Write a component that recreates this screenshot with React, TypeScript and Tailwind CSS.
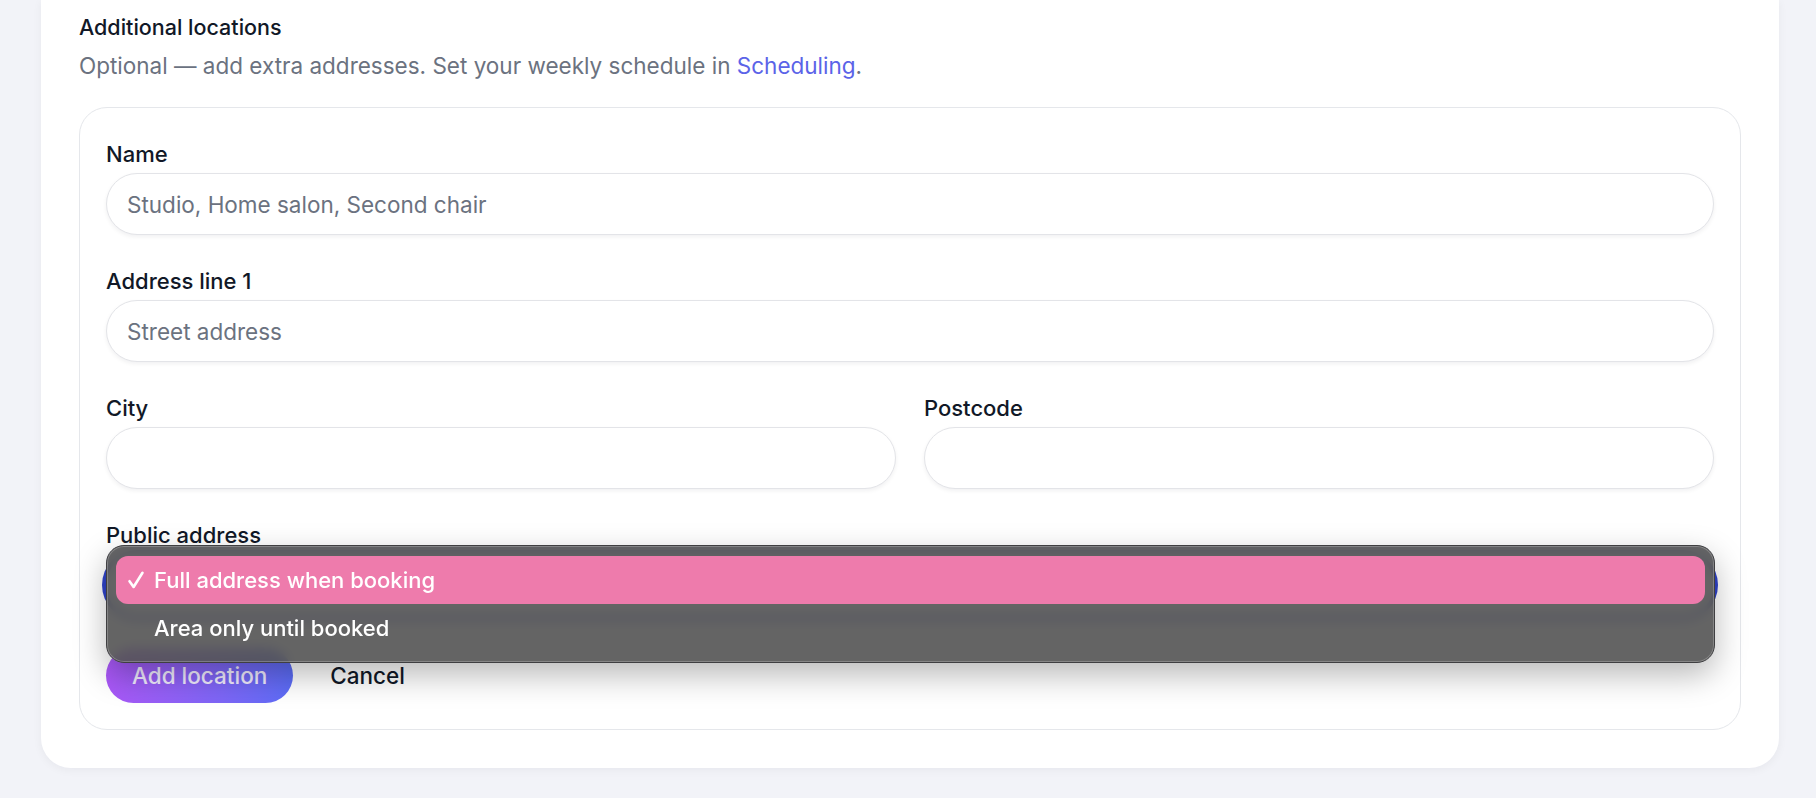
import React from 'react'

const Field = ({label, placeholder, className = ''}: {label: string; placeholder?: string; className?: string}) => (
  <label className={`block ${className}`}>
    <span className="block text-[22px] leading-[28px] font-medium text-[#111827]">{label}</span>
    <input
      placeholder={placeholder}
      className="mt-[5px] block h-[62px] w-full rounded-full border border-[#e3e4e8] bg-white px-[20px] text-[22.5px] text-[#111827] shadow-[0_2px_4px_rgba(15,23,42,0.06)] outline-none placeholder:text-[#6b7280]"
    />
  </label>
)

const App = () => {
  return (
    <div className="min-h-screen bg-[#f2f3f8] pl-[41px] pr-[37px] pb-[30px] font-[Inter,sans-serif] text-[#111827]">
      {/* Settings card (top is scrolled off) */}
      <section className="rounded-b-[30px] bg-white px-[38px] pt-[12px] pb-[38px] shadow-[0_2px_10px_rgba(15,23,42,0.05)]">
        <h2 className="text-[21.5px] leading-[30px] font-medium">Additional locations</h2>
        <p className="mt-[9px] text-[22.5px] leading-[30px] text-[#6b7280]">
          Optional — add extra addresses. Set your weekly schedule in{' '}
          <a href="#" className="text-[#5b63e8]">Scheduling</a>.
        </p>

        {/* New location form */}
        <div className="mt-[26px] rounded-[28px] border border-[#e5e7eb] bg-white px-[26px] pt-[32px] pb-[26px]">
          <div className="space-y-[32px]">
            <Field label="Name" placeholder="Studio, Home salon, Second chair" />
            <Field label="Address line 1" placeholder="Street address" />
            <div className="grid grid-cols-2 gap-[28px]">
              <Field label="City" />
              <Field label="Postcode" />
            </div>

            <div className="relative">
              <span className="block text-[22px] leading-[28px] font-medium text-[#111827]">Public address</span>
              {/* focused select, covered by its open menu */}
              <div className="mt-[5px] h-[62px] w-full rounded-full border border-[#e3e4e8] bg-white shadow-[0_0_0_4px_#2f43c9]" />

              {/* Native select menu, open */}
              <div className="absolute top-[24px] left-0 -right-px z-10 rounded-[18px] border border-[#3f3f41] bg-[#535353]/90 backdrop-blur-[6px] pt-[10px] pr-[9px] pb-[10px] pl-[9px] text-[22px] font-medium text-white shadow-[inset_0_0_0_1px_rgba(255,255,255,0.22),0_12px_32px_rgba(0,0,0,0.28)]">
                <div className="flex h-[48px] items-center rounded-[12px] bg-[#ee7bac]">
                  <svg className="ml-[11px] mr-[9px] h-[18px] w-[18px]" viewBox="0 0 18 18" fill="none">
                    <path d="M2.5 10.2 L6.6 16 L15.5 1.8" stroke="white" strokeWidth="2.6" strokeLinecap="round" strokeLinejoin="round" />
                  </svg>
                  <span>Full address when booking</span>
                </div>
                <div className="flex h-[48px] items-center pl-[38px]">
                  <span>Area only until booked</span>
                </div>
              </div>
            </div>

            <div className="flex items-center gap-[24px]">
              <button className="h-[55px] rounded-full bg-linear-to-r from-[#a957f6] to-[#5b6cf6] px-[26px] text-[22.5px] font-medium text-[#f1ecff]">
                Add location
              </button>
              <button className="px-[13px] text-[22.5px] font-medium text-[#111827]">Cancel</button>
            </div>
          </div>
        </div>
      </section>
    </div>
  )
}

export default App
